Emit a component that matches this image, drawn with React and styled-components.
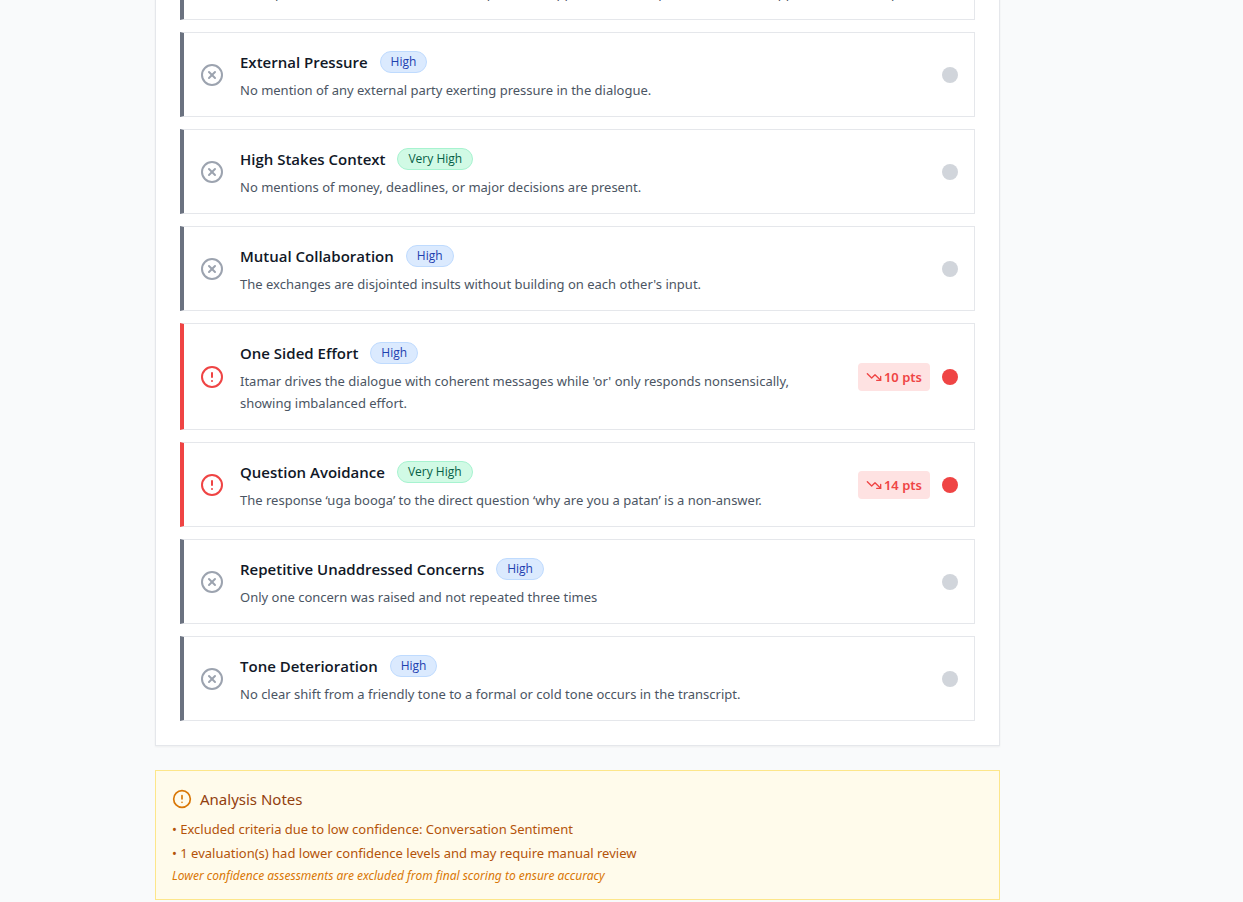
import React from "react";
import styled, { createGlobalStyle, css } from "styled-components";
import { CircleX, CircleAlert, TrendingDown } from "lucide-react";

const GlobalStyle = createGlobalStyle`
  *, *::before, *::after { box-sizing: border-box; }
  body {
    margin: 0;
    background: #f9fafb;
    color: #111827;
    font-family: "Segoe UI", "Noto Sans", sans-serif;
  }
  h2, h3, p, ul { margin: 0; padding: 0; font-weight: inherit; }
  ul { list-style: none; }
`;

const Page = styled.main`
  display: flex;
  flex-direction: column;
  justify-content: flex-end;
  gap: 24px;
  height: 100vh;
  overflow: hidden;
  padding: 0 243px 2px 155px;
`;

const Panel = styled.section`
  flex-shrink: 0;
  padding: 24px;
  background: #ffffff;
  border: 1px solid #e5e7eb;
  box-shadow: 0 1px 2px rgba(0, 0, 0, 0.05);
`;

const CriteriaList = styled.ul`
  display: flex;
  flex-direction: column;
  gap: 12px;
`;

const CriterionCard = styled.li`
  display: flex;
  align-items: center;
  gap: 16px;
  padding: 16px 16px 15px;
  border: 1px solid #e5e7eb;
  border-left: 4px solid ${(p) => (p.$flagged ? "#ef4444" : "#6b7280")};
`;

const StatusIcon = styled.span`
  display: flex;
  flex-shrink: 0;
  color: ${(p) => (p.$flagged ? "#ef4444" : "#9ca3af")};
`;

const Details = styled.div`
  flex: 1;
  min-width: 0;
`;

const TitleRow = styled.div`
  display: flex;
  align-items: center;
  gap: 12px;
  min-height: 25px;
  margin-bottom: 5px;
`;

const Title = styled.h3`
  font-family: "Segoe UI", "Open Sans", sans-serif;
  font-size: 15px;
  line-height: 24px;
  font-weight: 600;
`;

const badgeTones = {
  High: css`
    color: #1e40af;
    background: #dbeafe;
    border-color: #bfdbfe;
  `,
  "Very High": css`
    color: #065f46;
    background: #d1fae5;
    border-color: #a7f3d0;
  `,
};

const ConfidenceBadge = styled.span`
  padding: 0 10px;
  border: 1px solid;
  border-radius: 11px;
  font-family: "Segoe UI", "Open Sans", sans-serif;
  font-size: 12px;
  line-height: 20px;
  ${(p) => badgeTones[p.$level]}
`;

const Description = styled.p`
  color: #4b5563;
  font-size: 13px;
  line-height: 22px;
`;

const Outcome = styled.div`
  display: flex;
  flex-shrink: 0;
  align-items: center;
  gap: 12px;
`;

const Points = styled.span`
  display: flex;
  align-items: center;
  gap: 2px;
  padding: 0 8px;
  border-radius: 4px;
  background: #fee2e2;
  color: #ef4444;
  font-size: 13px;
  font-weight: 600;
  line-height: 28px;
`;

const Dot = styled.span`
  width: 16px;
  height: 16px;
  border-radius: 50%;
  background: ${(p) => (p.$flagged ? "#ef4444" : "#d1d5db")};
`;

const Notes = styled.section`
  flex-shrink: 0;
  padding: 16px 16px 12px;
  background: #fffbeb;
  border: 1px solid #fde68a;
`;

const NotesHeading = styled.h2`
  display: flex;
  align-items: center;
  gap: 8px;
  margin-bottom: 6px;
  color: #92400e;
  font-size: 15px;
  line-height: 24px;

  svg { color: #d97706; }
`;

const NoteLine = styled.li`
  color: #b45309;
  font-size: 13px;
  line-height: 24px;
`;

const Footnote = styled.p`
  color: #d97706;
  font-size: 12px;
  font-style: italic;
  line-height: 22px;
`;

const criteria = [
  { text: "No explicit statements of concern and repeat lines appear in both of parts and none of approved tiles are open" },
  { title: "External Pressure", level: "High", text: "No mention of any external party exerting pressure in the dialogue." },
  { title: "High Stakes Context", level: "Very High", text: "No mentions of money, deadlines, or major decisions are present." },
  { title: "Mutual Collaboration", level: "High", text: "The exchanges are disjointed insults without building on each other's input." },
  { title: "One Sided Effort", level: "High", points: 10, text: "Itamar drives the dialogue with coherent messages while 'or' only responds nonsensically, showing imbalanced effort." },
  { title: "Question Avoidance", level: "Very High", points: 14, text: "The response ‘uga booga’ to the direct question ‘why are you a patan’ is a non-answer." },
  { title: "Repetitive Unaddressed Concerns", level: "High", text: "Only one concern was raised and not repeated three times" },
  { title: "Tone Deterioration", level: "High", text: "No clear shift from a friendly tone to a formal or cold tone occurs in the transcript." },
];

function Criterion({ title, level, text, points }) {
  const flagged = points !== undefined;
  const Icon = flagged ? CircleAlert : CircleX;
  return (
    <CriterionCard $flagged={flagged}>
      <StatusIcon $flagged={flagged}>
        <Icon size={24} />
      </StatusIcon>
      <Details>
        <TitleRow>
          {title && <Title>{title}</Title>}
          {level && <ConfidenceBadge $level={level}>{level}</ConfidenceBadge>}
        </TitleRow>
        <Description>{text}</Description>
      </Details>
      <Outcome>
        {flagged && (
          <Points>
            <TrendingDown size={16} />
            {points} pts
          </Points>
        )}
        <Dot $flagged={flagged} />
      </Outcome>
    </CriterionCard>
  );
}

export default function App() {
  return (
    <>
      <GlobalStyle />
      <Page>
        <Panel>
          <CriteriaList>
            {criteria.map((item) => (
              <Criterion key={item.text} {...item} />
            ))}
          </CriteriaList>
        </Panel>
        <Notes>
          <NotesHeading>
            <CircleAlert size={20} />
            Analysis Notes
          </NotesHeading>
          <ul>
            <NoteLine>• Excluded criteria due to low confidence: Conversation Sentiment</NoteLine>
            <NoteLine>• 1 evaluation(s) had lower confidence levels and may require manual review</NoteLine>
          </ul>
          <Footnote>Lower confidence assessments are excluded from final scoring to ensure accuracy</Footnote>
        </Notes>
      </Page>
    </>
  );
}
